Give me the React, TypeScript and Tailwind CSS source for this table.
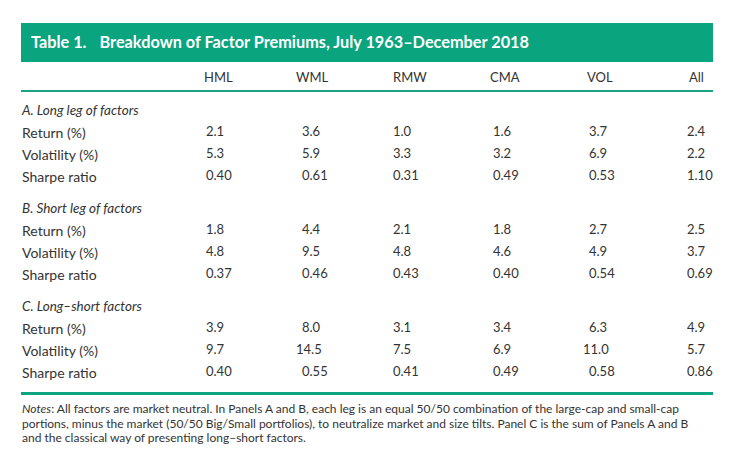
import React from "react";

type Row = { label: string; values: string[] };
type Panel = { title: string; rows: Row[] };

const columns = [
  { name: "HML", className: "-ml-[2px]" },
  { name: "WML", className: "-ml-[6px]" },
  { name: "RMW", className: "" },
  { name: "CMA", className: "-ml-[3px]" },
  { name: "VOL", className: "-ml-[2px]" },
  { name: "All", className: "ml-[2px]" },
];

const panels: Panel[] = [
  {
    title: "A. Long leg of factors",
    rows: [
      { label: "Return (%)", values: ["2.1", "3.6", "1.0", "1.6", "3.7", "2.4"] },
      { label: "Volatility (%)", values: ["5.3", "5.9", "3.3", "3.2", "6.9", "2.2"] },
      { label: "Sharpe ratio", values: ["0.40", "0.61", "0.31", "0.49", "0.53", "1.10"] },
    ],
  },
  {
    title: "B. Short leg of factors",
    rows: [
      { label: "Return (%)", values: ["1.8", "4.4", "2.1", "1.8", "2.7", "2.5"] },
      { label: "Volatility (%)", values: ["4.8", "9.5", "4.8", "4.6", "4.9", "3.7"] },
      { label: "Sharpe ratio", values: ["0.37", "0.46", "0.43", "0.40", "0.54", "0.69"] },
    ],
  },
  {
    title: "C. Long\u2013short factors",
    rows: [
      { label: "Return (%)", values: ["3.9", "8.0", "3.1", "3.4", "6.3", "4.9"] },
      { label: "Volatility (%)", values: ["9.7", "14.5", "7.5", "6.9", "11.0", "5.7"] },
      { label: "Sharpe ratio", values: ["0.40", "0.55", "0.41", "0.49", "0.58", "0.86"] },
    ],
  },
];

const grid = "grid grid-cols-[184px_96px_91px_100px_96px_98px_27px]";

// two-digit numbers hang left so the decimal points line up
function Value({ v }: { v: string }) {
  const wide = v.split(".")[0].length > 1;
  return <span className={wide ? "-ml-[6px]" : ""}>{v}</span>;
}

export default function App() {
  return (
    <div
      className="w-[740px] h-[462px] bg-white text-[#333333] pt-[23px] px-[21px]"
      style={{ fontFamily: "Lato, 'Open Sans', sans-serif" }}
    >
      <div className="w-[692px]">
        {/* Title bar */}
        <div className="h-[39px] bg-[#0aa47e] flex items-center pl-[10px] text-white font-bold text-[16.3px]">
          <span>Table 1.</span>
          <span className="ml-[13px]">Breakdown of Factor Premiums, July 1963–December 2018</span>
        </div>

        {/* Column headers */}
        <div className={`${grid} h-[28px] pt-[4px] items-center text-[13px] pl-[1px]`}>
          <div></div>
          {columns.map((c) => (
            <div key={c.name} className={c.className}>
              {c.name}
            </div>
          ))}
        </div>
        <div className="h-[2px] bg-[#1aa283]"></div>

        {/* Panels */}
        <div className="pt-[7px] pb-[9px] flex flex-col gap-[10px] pl-[1px]">
          {panels.map((p) => (
            <div key={p.title}>
              <div className="h-[22px] flex items-center italic text-[13.5px]">{p.title}</div>
              {p.rows.map((r) => (
                <div key={r.label} className={`${grid} h-[22px] items-center text-[13px]`}>
                  <div className="text-[14px]">{r.label}</div>
                  {r.values.map((v, i) => (
                    <div key={i}>
                      <Value v={v} />
                    </div>
                  ))}
                </div>
              ))}
            </div>
          ))}
        </div>
        <div className="h-[3px] bg-[#0aa47e]"></div>

        {/* Notes */}
        <p className="mt-[7px] text-[12px] leading-[14.5px] pl-[1px] whitespace-nowrap">
          <span className="italic">Notes</span>: All factors are market neutral. In Panels A and B, each leg is an equal
          50/50 combination of the large-cap and small-cap
          <br />
          portions, minus the market (50/50 Big/Small portfolios), to neutralize market and size tilts. Panel C is the
          sum of Panels A and B
          <br />
          and the classical way of presenting long–short factors.
        </p>
      </div>
    </div>
  );
}
